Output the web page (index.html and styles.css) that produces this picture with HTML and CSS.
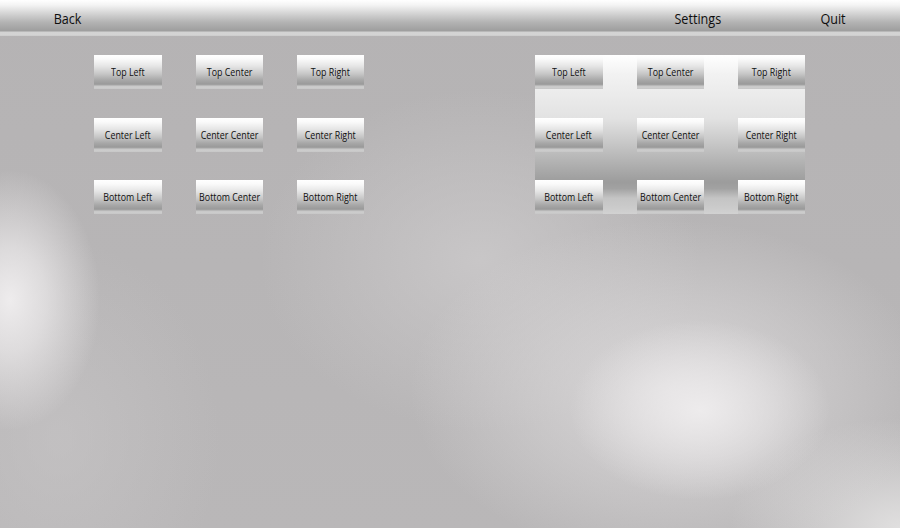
FILE: index.html
```html
<!DOCTYPE html>
<html>
<head>
<meta charset="utf-8">
<link rel="stylesheet" href="styles.css">
</head>
<body>
<header class="topbar">
  <div class="tb-item"><span class="lbl lbl-bar">Back</span></div>
  <div class="tb-spacer"></div>
  <div class="tb-item"><span class="lbl lbl-bar">Settings</span></div>
  <div class="tb-item"><span class="lbl lbl-bar">Quit</span></div>
</header>
<main class="content">
  <section class="grid grid-left">
    <div class="btn"><span class="lbl">Top Left</span></div>
    <div class="btn"><span class="lbl">Top Center</span></div>
    <div class="btn"><span class="lbl">Top Right</span></div>
    <div class="btn"><span class="lbl">Center Left</span></div>
    <div class="btn"><span class="lbl">Center Center</span></div>
    <div class="btn"><span class="lbl">Center Right</span></div>
    <div class="btn"><span class="lbl">Bottom Left</span></div>
    <div class="btn"><span class="lbl">Bottom Center</span></div>
    <div class="btn"><span class="lbl">Bottom Right</span></div>
  </section>
  <section class="grid grid-right">
    <div class="btn"><span class="lbl">Top Left</span></div>
    <div class="btn"><span class="lbl">Top Center</span></div>
    <div class="btn"><span class="lbl">Top Right</span></div>
    <div class="btn"><span class="lbl">Center Left</span></div>
    <div class="btn"><span class="lbl">Center Center</span></div>
    <div class="btn"><span class="lbl">Center Right</span></div>
    <div class="btn"><span class="lbl">Bottom Left</span></div>
    <div class="btn"><span class="lbl">Bottom Center</span></div>
    <div class="btn"><span class="lbl">Bottom Right</span></div>
  </section>
</main>
</body>
</html>
```
FILE: styles.css
```css
html, body {
  margin: 0;
  padding: 0;
  width: 900px;
  height: 528px;
  overflow: hidden;
}
body {
  font-family: "Open Sans", "DejaVu Sans", sans-serif;
  color: #111111;
  background-color: #b6b4b5;
  background-image:
    radial-gradient(ellipse 90px 130px at 10px 300px, rgba(238,236,237,1) 0%, rgba(236,234,235,0.7) 40%, rgba(236,234,235,0) 100%),
    radial-gradient(ellipse 130px 90px at 700px 410px, rgba(240,238,239,0.9) 0%, rgba(238,236,237,0.45) 55%, rgba(230,228,229,0) 100%),
    radial-gradient(ellipse 260px 170px at 670px 390px, rgba(224,222,223,0.85) 0%, rgba(224,222,223,0.4) 55%, rgba(224,222,223,0) 100%),
    radial-gradient(ellipse 170px 110px at 900px 528px, rgba(224,223,223,1) 0%, rgba(224,223,223,0) 100%),
    radial-gradient(ellipse 220px 170px at 480px 260px, rgba(206,204,205,0.75) 0%, rgba(206,204,205,0) 100%),
    radial-gradient(ellipse 160px 200px at 60px 440px, rgba(200,198,199,0.6) 0%, rgba(200,198,199,0) 100%),
    linear-gradient(to bottom, #b5b3b4 0%, #b9b7b8 100%);
}
.lbl {
  display: inline-block;
  white-space: nowrap;
  transform: scaleX(0.77);
}
.lbl-bar {
  transform: scaleX(0.84);
}
.topbar {
  display: flex;
  height: 36px;
  box-sizing: border-box;
  background: linear-gradient(to bottom,
    #ffffff 0px, #f4f4f4 5px, #d2d2d2 14px, #b4b4b4 22px, #a2a2a2 29px, #9e9e9e 31px,
    #d2d2d2 32px, #d4d4d4 35px, #c8c8c8 36px);
}
.tb-item {
  width: 135px;
  height: 32px;
  padding-top: 4px;
  box-sizing: border-box;
  display: flex;
  align-items: center;
  justify-content: center;
  font-size: 15px;
  color: #0e0e0e;
}
.tb-spacer { flex: 1; }
.content {
  display: flex;
  padding: 19px 0 0 94px;
  gap: 171px;
}
.grid {
  display: grid;
  grid-template-columns: 68px 67px 67px;
  grid-auto-rows: 34px;
  column-gap: 34px;
  row-gap: 28.5px;
}
.grid-right {
  background: linear-gradient(to bottom,
    #ffffff 0%, #f2f2f2 12%, #ebebeb 25%, #e2e2e2 40%, #c8c8c8 55%,
    #aaaaaa 72%, #9c9c9c 80%, #a2a2a2 84%, #c4c4c4 90%, #cbcbcb 96%, #d2d2d2 100%);
}
.btn {
  display: flex;
  align-items: center;
  justify-content: center;
  padding-bottom: 1px;
  box-sizing: border-box;
  font-size: 11.5px;
  color: #101010;
  background: linear-gradient(to bottom,
    #ffffff 0px, #fafafa 4px, #e6e6e6 11px, #c6c6c6 19px, #a8a8a8 25px, #9a9a9a 29px,
    #a6a6a6 30px, #c8c8c8 31px, #cdcdcd 33px, #c4c4c4 34px);
}
```
